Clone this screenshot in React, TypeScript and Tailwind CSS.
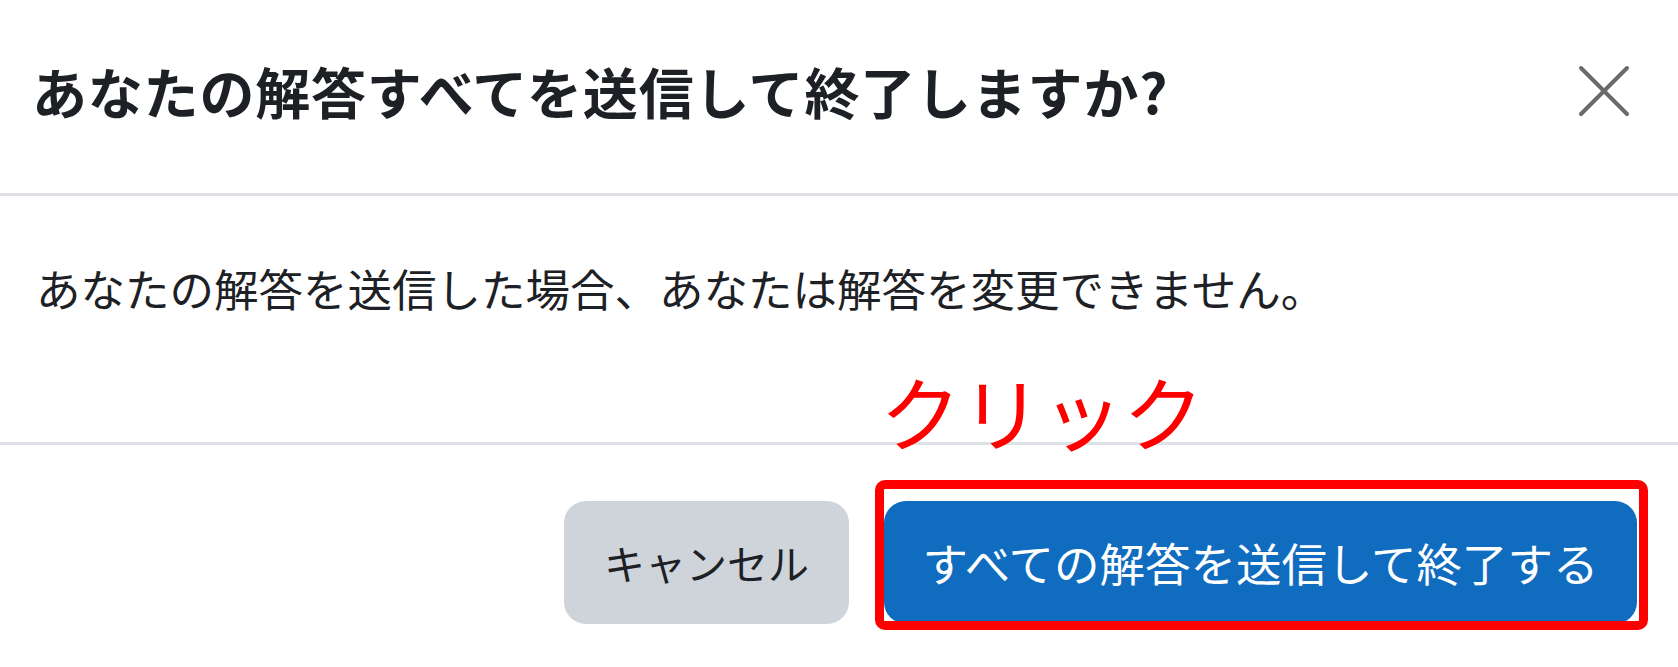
const font = { fontFamily: '"Noto Sans CJK JP", "Noto Sans", sans-serif' };

export default function App() {
  return (
    <div className="w-full h-[667px] bg-white text-[#1d2125] overflow-hidden" style={font}>
      <div className="h-[196px] flex items-center justify-between pl-[32px] pr-[48px] pb-[12px] border-b-[3px] border-[#dee2e6]">
        <h1 className="text-[55px] font-bold leading-none tracking-[0.8px]">
          あなたの解答すべてを送信して終了しますか?
        </h1>
        <button className="text-[#6a6a6a]">
          <svg width="52" height="52" viewBox="0 0 52 52" fill="none" stroke="currentColor" strokeWidth="4" strokeLinecap="round">
            <path d="M3 3 49 49M49 3 3 49" />
          </svg>
        </button>
      </div>

      <div className="h-[246px] pl-[36px] pt-[70px]">
        <p className="text-[44.5px] leading-none">
          あなたの解答を送信した場合、あなたは解答を変更できません。
        </p>
      </div>

      <div className="flex justify-end gap-[35px] pt-[56px] pr-[41px] border-t-[3px] border-[#dee2e6]">
        <button className="w-[285px] h-[123px] rounded-[22px] bg-[#ced4da] text-[41px] leading-none">
          キャンセル
        </button>
        <div className="relative">
          <span className="absolute left-[-4px] top-[-132px] text-[81px] leading-none text-[#ff0000] whitespace-nowrap">
            クリック
          </span>
          <button className="w-[753px] h-[123px] rounded-[22px] bg-[#0f6cbf] text-white text-[45.5px] leading-none">
            すべての解答を送信して終了する
          </button>
          <div className="absolute left-[-9px] right-[-11px] top-[-21px] bottom-[-6px] border-[9px] border-[#ff0000] rounded-[10px]" />
        </div>
      </div>
    </div>
  );
}
